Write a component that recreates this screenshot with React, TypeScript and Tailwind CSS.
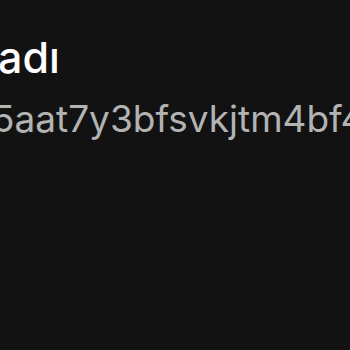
export default function App() {
  return (
    <div className="w-[350px] h-[350px] overflow-hidden bg-[#121212] font-['Inter',sans-serif]">
      <div className="pt-[30px] -ml-[2px] flex flex-col whitespace-nowrap">
        <h1 className="text-[43px] leading-[54px] font-medium text-white">adı</h1>
        <p className="-ml-[6px] mt-[12px] text-[37px] leading-[46px] text-[#b3b3b3]">5aat7y3bfsvkjtm4bf4</p>
      </div>
    </div>
  );
}
